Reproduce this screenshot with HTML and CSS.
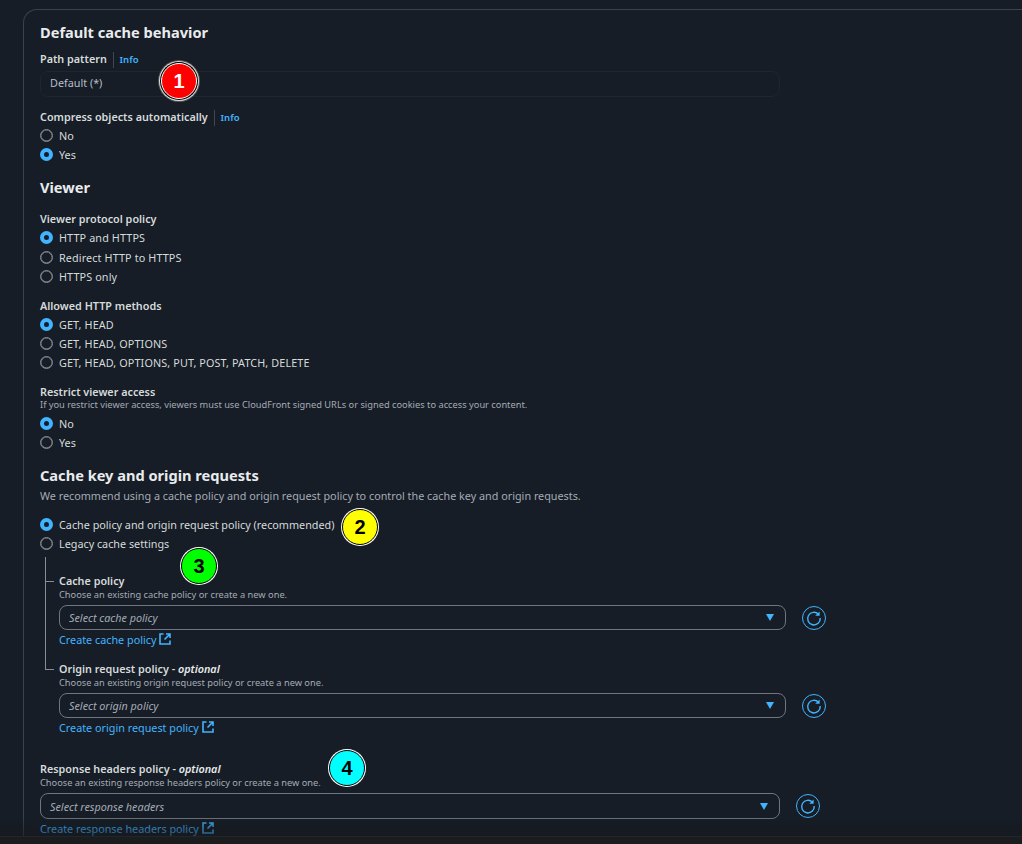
FILE: index.html
```html
<!DOCTYPE html>
<html lang="en">
<head>
  <meta charset="UTF-8">
  <title>Default cache behavior</title>
  <link rel="stylesheet" href="styles.css">
</head>
<body>
  <svg class="defs">
    <symbol id="ext" viewBox="0 0 12 12">
      <path d="M4.5 1H1v10h10V7.5" fill="none" stroke="currentColor" stroke-width="1.6"/>
      <path d="M7 1h4v4M11 1 5.5 6.5" fill="none" stroke="currentColor" stroke-width="1.6"/>
    </symbol>
    <symbol id="refresh" viewBox="0 0 24 24">
      <circle cx="12" cy="12" r="11.5" fill="none" stroke="currentColor"/>
      <path d="M16.6 8.4A6.3 6.3 0 1 0 18.2 12" fill="none" stroke="currentColor" stroke-width="1.4"/>
      <path d="M17.6 5.4v4.4h-4.4z" fill="currentColor"/>
    </symbol>
  </svg>

  <div class="card">
    <h2 class="first">Default cache behavior</h2>
    <div class="label">Path pattern <span class="info">Info</span></div>
    <div class="readonly">Default (*)</div>

    <div class="label compress">Compress objects automatically <span class="info">Info</span></div>
    <div class="radio">No</div>
    <div class="radio on">Yes</div>

    <h2 class="viewer">Viewer</h2>
    <div class="label group">Viewer protocol policy</div>
    <div class="radio on caps">HTTP and HTTPS</div>
    <div class="radio caps">Redirect HTTP to HTTPS</div>
    <div class="radio caps">HTTPS only</div>

    <div class="label group2">Allowed HTTP methods</div>
    <div class="radio on caps">GET, HEAD</div>
    <div class="radio caps">GET, HEAD, OPTIONS</div>
    <div class="radio caps">GET, HEAD, OPTIONS, PUT, POST, PATCH, DELETE</div>

    <div class="label group3">Restrict viewer access</div>
    <div class="desc restrict">If you restrict viewer access, viewers must use CloudFront signed URLs or signed cookies to access your content.</div>
    <div class="radio on">No</div>
    <div class="radio">Yes</div>

    <h2 class="cachekey">Cache key and origin requests</h2>
    <div class="lead">We recommend using a cache policy and origin request policy to control the cache key and origin requests.</div>
    <div class="radio on">Cache policy and origin request policy (recommended)</div>
    <div class="radio">Legacy cache settings</div>

    <div class="tree">
      <div class="branch">
        <div class="label">Cache policy</div>
        <div class="desc">Choose an existing cache policy or create a new one.</div>
        <div class="select-row">
          <div class="select">Select cache policy<span class="caret"></span></div>
          <svg class="refresh"><use href="#refresh"/></svg>
        </div>
        <a class="link">Create cache policy <svg class="ext"><use href="#ext"/></svg></a>
      </div>
      <div class="branch second">
        <div class="label">Origin request policy - <em>optional</em></div>
        <div class="desc">Choose an existing origin request policy or create a new one.</div>
        <div class="select-row">
          <div class="select">Select origin policy<span class="caret"></span></div>
          <svg class="refresh"><use href="#refresh"/></svg>
        </div>
        <a class="link">Create origin request policy <svg class="ext"><use href="#ext"/></svg></a>
      </div>
    </div>

    <div class="response">
      <div class="label">Response headers policy - <em>optional</em></div>
      <div class="desc">Choose an existing response headers policy or create a new one.</div>
      <div class="select-row">
        <div class="select tall">Select response headers<span class="caret"></span></div>
        <svg class="refresh"><use href="#refresh"/></svg>
      </div>
      <a class="link">Create response headers policy <svg class="ext"><use href="#ext"/></svg></a>
    </div>
  </div>

  <div class="footer"></div>

  <div class="badge red">1</div>
  <div class="badge yellow">2</div>
  <div class="badge green">3</div>
  <div class="badge cyan">4</div>
</body>
</html>
```

FILE: styles.css
```css
html, body {
  height: 100%;
  overflow: hidden;
}
body {
  margin: 0;
  position: relative;
  display: flex;
  flex-direction: column;
  background: #161d26;
  color: #d5dbdb;
  font-family: "Noto Sans", Arial, sans-serif;
  font-size: 10.8px;
}
.defs {
  display: none;
}
.card {
  flex: 1;
  min-height: 0;
  overflow: hidden;
  margin: 9px 0 0 23px;
  padding: 11px 0 0 16px;
  border: 1px solid #3d4148;
  border-width: 1px 0 0 1px;
  border-radius: 14px 0 0 0;
}
h2 {
  margin: 0;
  font-size: 14.6px;
  line-height: 22px;
  font-weight: 700;
  color: #e9ebed;
}
h2.first {
  margin-bottom: 8px;
}
h2.viewer {
  margin-top: 12px;
}
h2.cachekey {
  margin-top: 12px;
}
.label {
  font-size: 10.8px;
  line-height: 16px;
  font-weight: 600;
  color: #d5dbdb;
}
.label em {
  font-weight: 600;
  color: #e9ebed;
}
.info {
  margin-left: 3px;
  padding-left: 6px;
  border-left: 1px solid #414750;
  color: #42b4ff;
  font-size: 9.5px;
  font-weight: 600;
  display: inline-block;
}
.readonly {
  margin-top: 3px;
  width: 729px;
  height: 24px;
  padding-left: 9px;
  border: 1px solid #1f2630;
  border-radius: 8px;
  line-height: 22px;
  color: #b6bec9;
}
.compress {
  margin-top: 12px;
}
.group {
  margin-top: 13px;
  margin-bottom: 1px;
}
.group2 {
  margin-top: 12px;
  margin-bottom: 1px;
}
.group3 {
  margin-top: 11px;
  margin-bottom: 1px;
}
.radio {
  display: flex;
  align-items: center;
  gap: 6px;
  height: 19.2px;
  color: #d5dbdb;
}
.radio.caps {
  letter-spacing: 0.12px;
}
.radio::before {
  content: "";
  flex: none;
  width: 11px;
  height: 11px;
  border: 1px solid #8c8c94;
  box-shadow: inset 0 0 0 0.4px #8c8c94;
  border-radius: 50%;
}
.radio.on::before {
  width: 5px;
  height: 5px;
  border: 4px solid #42b4ff;
  box-shadow: none;
  background: #161d26;
}
.desc {
  font-size: 9.27px;
  line-height: 11px;
  color: #a4abb5;
}
.desc.restrict {
  margin-top: -2px;
  margin-bottom: 4px;
}
.lead {
  margin-top: 2px;
  margin-bottom: 11px;
  font-size: 10.8px;
  line-height: 16px;
  color: #a4abb5;
}
.tree {
  margin: 4px 0 0 5px;
  padding-left: 14px;
}
.branch {
  position: relative;
  padding-top: 16px;
}
/* the first branch carries the long line down to the second */
.branch::before {
  content: "";
  position: absolute;
  left: -14px;
  top: 0;
  width: 8px;
  height: 24px;
  border-left: 1px solid #8c8c94;
  border-bottom: 1px solid #8c8c94;
}
.branch::after {
  content: "";
  position: absolute;
  left: -14px;
  top: 0;
  bottom: 0;
  border-left: 1px solid #8c8c94;
}
.branch.second {
  padding-top: 13px;
}
.branch.second::before {
  height: 21px;
}
.branch.second::after {
  display: none;
}
.select-row {
  display: flex;
  align-items: center;
  gap: 16px;
  margin-top: 5px;
}
.select {
  flex: none;
  width: 716px;
  height: 22.5px;
  padding-left: 9px;
  border: 1px solid #6f7680;
  border-radius: 8px;
  display: flex;
  align-items: center;
  justify-content: space-between;
  font-style: italic;
  color: #a4abb5;
}
.select.tall {
  width: 729px;
  height: 23.6px;
}
.caret {
  margin-right: 11px;
  border-left: 4.5px solid transparent;
  border-right: 4.5px solid transparent;
  border-top: 7px solid #42b4ff;
}
.refresh {
  width: 24px;
  height: 24px;
  color: #42b4ff;
}
.link {
  display: block;
  margin-top: 2.5px;
  line-height: 16px;
  color: #42b4ff;
}
.ext {
  width: 12px;
  height: 12px;
  vertical-align: -1px;
}
.response {
  margin-top: 25px;
}
.footer {
  flex: none;
  position: relative;
  height: 8px;
  background: #1b1c1e;
  border-top: 1px solid #33363b;
  box-sizing: border-box;
}
/* content fades out just above the footer bar */
.footer::before {
  content: "";
  position: absolute;
  left: 0;
  right: 0;
  bottom: 100%;
  height: 22px;
  background: linear-gradient(rgba(22, 24, 28, 0), rgba(22, 24, 28, 0.6));
}
.badge {
  position: absolute;
  width: 36px;
  height: 36px;
  box-sizing: border-box;
  border: 1px solid #000;
  box-shadow: 0 0 0 1px #fff;
  border-radius: 50%;
  display: flex;
  align-items: center;
  justify-content: center;
  font-family: "Liberation Sans", Arial, sans-serif;
  font-size: 20px;
  font-weight: 700;
  color: #000;
}
.red {
  left: 161px;
  top: 63px;
  background: #ff0000;
  color: #fff;
  border-color: #fff;
  box-shadow: 0 0 0 1px #000, 0 0 0 2px #ddd, 0 0 0 3px #555;
}
.yellow {
  left: 342px;
  top: 509px;
  background: #ffff00;
}
.green {
  left: 181px;
  top: 548px;
  background: #00ff00;
}
.cyan {
  left: 329px;
  top: 750px;
  background: #00ffff;
}
```
